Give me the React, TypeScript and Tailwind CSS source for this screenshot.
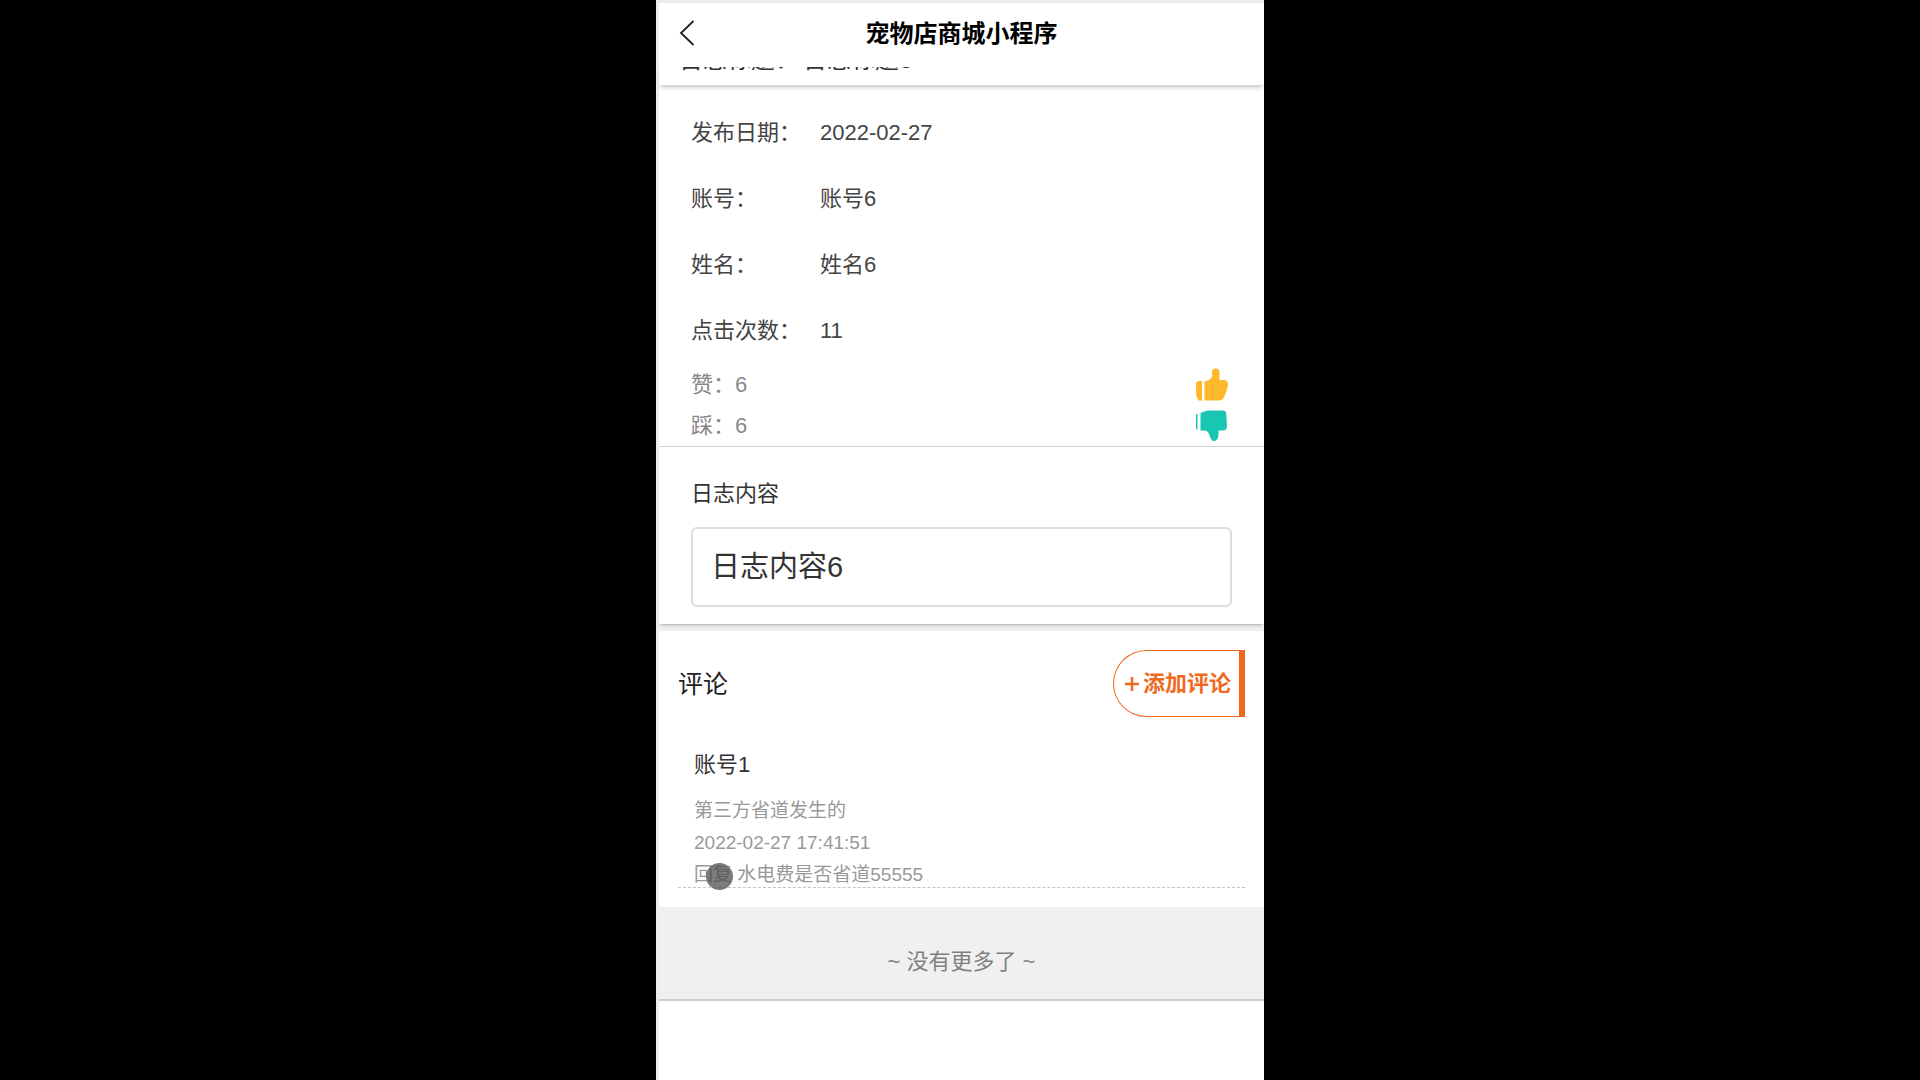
import { useState } from "react";

interface Comment {
  id: number;
  author: string;
  content: string;
  time: string;
  reply: string;
}

const fields = [
  { label: "发布日期：", value: "2022-02-27" },
  { label: "账号：", value: "账号6" },
  { label: "姓名：", value: "姓名6" },
  { label: "点击次数：", value: "11" },
];

const comments: Comment[] = [
  {
    id: 1,
    author: "账号1",
    content: "第三方省道发生的",
    time: "2022-02-27 17:41:51",
    reply: "水电费是否省道55555",
  },
];

function BackIcon() {
  return (
    <svg width="16" height="26" viewBox="0 0 16 26" fill="none" stroke="#222" strokeWidth="1.8">
      <path d="M14.5 1L2 13l12.5 12" />
    </svg>
  );
}

function ThumbUpIcon() {
  return (
    <svg width="34" height="34" viewBox="0 0 34 34" fill="#fdb92b">
      <path d="M3.5 13H7V32.500H3.5Q1 29 1 25V18Q1 13 3.5 13Z" />
      <path d="M9.5 13.500Q14 12.500 16 10.500Q17.500 8.500 17 4Q17 .5 20.500 .5Q24.500 .5 24.500 4.500V12H29Q33 12 33 16.500Q33 19 31.500 23L29.500 28Q28 32.500 24 32.500H9.500Z" />
    </svg>
  );
}

function ThumbDownIcon() {
  return (
    <svg width="34" height="34" viewBox="0 0 34 34" fill="#19c6b2">
      <path d="M1 5H2.500V20.500H1Z" />
      <path d="M5.500 4Q9.500 2 13 1.500H28Q31 1.500 31.300 5L32 17Q32 21 28.500 21.500H23.500V26Q23 32 18.500 32Q16.500 32 15 27.500Q13.500 22 10 21.500H5.500Z" />
    </svg>
  );
}

function Header({ title }: { title: string }) {
  return (
    <header className="relative z-10 flex h-16 shrink-0 items-center justify-center bg-white pb-0.5">
      <button type="button" aria-label="返回" className="absolute left-5 top-[17px]">
        <BackIcon />
      </button>
      <h1 className="text-2xl font-bold text-black">{title}</h1>
    </header>
  );
}

function CommentItem({ comment }: { comment: Comment }) {
  return (
    <li className="border-b border-dashed border-[#c4c4c4] px-4 text-[19px] leading-8 text-[#999]">
      <p className="mb-[14px] text-[22px] text-[#333]">{comment.author}</p>
      <p>{comment.content}</p>
      <p>{comment.time}</p>
      <p className="relative -mb-1">
        回复 {comment.reply}
        {/* touch pointer */}
        <span className="absolute left-3 top-1 size-[27px] rounded-full border-2 border-[#777]/70 bg-[#444]/70" />
      </p>
    </li>
  );
}

export default function App() {
  const [likes, setLikes] = useState(6);
  const [dislikes, setDislikes] = useState(6);

  return (
    <div className="flex min-h-screen justify-center bg-black font-['Liberation_Sans','Noto_Sans_CJK_SC',sans-serif]">
      <div className="flex w-full max-w-[608px] flex-col border-l-[3px] border-t-[3px] border-[#ececec] bg-white">
        <Header title="宠物店商城小程序" />

        <main className="flex flex-1 flex-col text-[22px] leading-[34px]">
          {/* title row, scrolled under the header */}
          <section className="flex h-[18px] items-end overflow-hidden pb-2 pl-5 text-2xl leading-[34px] text-[#333] shadow-[0_4px_5px_-2px_rgba(0,0,0,0.25)]">
            <span className="w-[124px]">日志标题：</span>
            <span>日志标题6</span>
          </section>

          <section className="border-b border-[#d4d4d4] px-8 pt-[31px]">
            <dl className="flex flex-col gap-8 text-[#444]">
              {fields.map((field) => (
                <div key={field.label} className="flex">
                  <dt className="w-[129px]">{field.label}</dt>
                  <dd>{field.value}</dd>
                </div>
              ))}
            </dl>
            <div className="mt-4 text-[#888]">
              <div className="flex h-[41px] items-center justify-between">
                <span>赞：{likes}</span>
                <button type="button" aria-label="赞" className="mr-[3px]" onClick={() => setLikes(likes + 1)}>
                  <ThumbUpIcon />
                </button>
              </div>
              <div className="flex h-[41px] items-center justify-between">
                <span>踩：{dislikes}</span>
                <button type="button" aria-label="踩" className="mr-[3px]" onClick={() => setDislikes(dislikes + 1)}>
                  <ThumbDownIcon />
                </button>
              </div>
            </div>
          </section>

          <section className="relative px-8 pb-[17px] pt-[30px] shadow-[0_3px_3px_-2px_rgba(0,0,0,0.3)]">
            <h2 className="text-[#333]">日志内容</h2>
            <div className="mt-4 rounded-md border-2 border-[#dcdcdc] px-[18px] py-5 text-[29px] leading-9 text-[#333]">
              日志内容6
            </div>
          </section>

          <div className="h-[7px] bg-[#efefef]" />

          <section className="px-[19px] py-[19px]">
            <div className="flex items-center justify-between">
              <h2 className="text-[25px] text-[#222]">评论</h2>
              <button
                type="button"
                className="flex h-[67px] items-center gap-[3px] rounded-l-full border border-r-[6px] border-[#f06a1d] pl-2.5 pr-2 font-bold text-[#f06a1d]"
              >
                <svg width="16" height="16" viewBox="0 0 16 16" stroke="currentColor" strokeWidth="2.5">
                  <path d="M8 1v14M1 8h14" />
                </svg>
                添加评论
              </button>
            </div>
            <ul className="mt-8">
              {comments.map((comment) => (
                <CommentItem key={comment.id} comment={comment} />
              ))}
            </ul>
          </section>

          <footer className="border-b-2 border-[#cdcdcd] bg-[#f0f0f0] pb-5 pt-[38px] text-center text-[#808080]">
            ~ 没有更多了 ~
          </footer>
        </main>
      </div>
    </div>
  );
}
